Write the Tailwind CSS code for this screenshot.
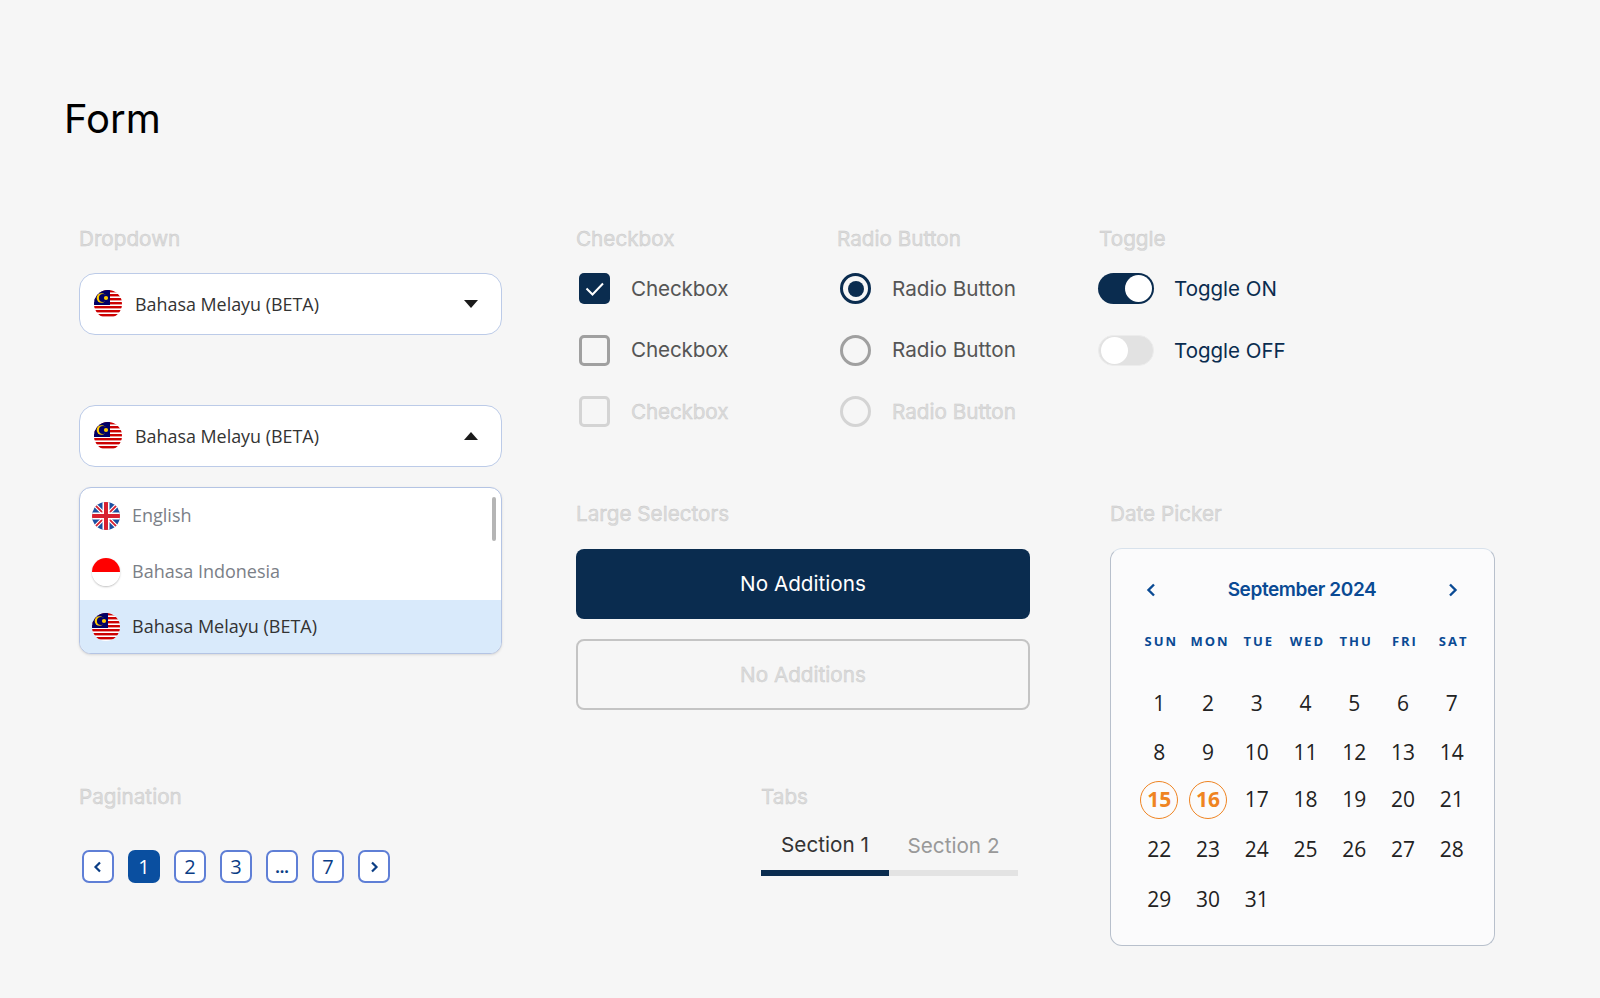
<!DOCTYPE html>
<html lang="en">
<head>
    <meta charset="UTF-8">
    <meta name="viewport" content="width=device-width, initial-scale=1.0">
    <script src="https://cdn.jsdelivr.net/npm/@tailwindcss/browser@4"></script>
    <title>Form</title>
</head>
<body class="bg-[#f6f6f6] font-['Inter',sans-serif]">

    <!-- flags, reused below -->
    <svg class="hidden">
        <symbol id="flag-my" viewBox="0 0 28 28">
            <rect width="28" height="28" fill="#fff"/>
            <rect y="0" width="28" height="2.4" fill="#cc0001"/>
            <rect y="4" width="28" height="2.4" fill="#cc0001"/>
            <rect y="8" width="28" height="2.4" fill="#cc0001"/>
            <rect y="12" width="28" height="2.4" fill="#cc0001"/>
            <rect y="16" width="28" height="2.4" fill="#cc0001"/>
            <rect y="20" width="28" height="2.4" fill="#cc0001"/>
            <rect y="24" width="28" height="2.4" fill="#cc0001"/>
            <rect width="16" height="15" fill="#010066"/>
            <circle cx="7.5" cy="8" r="4.8" fill="#ffcc00"/>
            <circle cx="9" cy="8" r="4.1" fill="#010066"/>
            <circle cx="12" cy="8" r="2.1" fill="#ffcc00"/>
        </symbol>
        <symbol id="flag-uk" viewBox="0 0 28 28">
            <rect width="28" height="28" fill="#1c4fa1"/>
            <path d="M0 0L28 28M28 0L0 28" stroke="#fff" stroke-width="4"/>
            <path d="M0 0L28 28M28 0L0 28" stroke="#d8202f" stroke-width="1.8"/>
            <path d="M14 0V28M0 14H28" stroke="#fff" stroke-width="7"/>
            <path d="M14 0V28M0 14H28" stroke="#d8202f" stroke-width="4"/>
        </symbol>
        <symbol id="flag-id" viewBox="0 0 28 28">
            <rect width="28" height="14" fill="#ff0000"/>
            <rect y="14" width="28" height="14" fill="#fff"/>
        </symbol>
    </svg>

    <div class="h-[998px] overflow-hidden">
        <h1 class="pt-[95px] pl-[64px] text-[40px] leading-[48px] text-black">Form</h1>

        <div class="mt-[83px] ml-[79px] grid grid-cols-[497px_534px_400px] grid-rows-[275px_283px_auto]">

            <!-- dropdown -->
            <section class="row-span-2 w-[423px]">
                <h2 class="text-[20.7px] leading-[26px] text-[#dcdcdc] [-webkit-text-stroke:0.4px_#c8c8c8]">Dropdown</h2>
                <div class="mt-[21px] h-[62px] flex items-center pl-[14px] pr-[23px] bg-white border border-[#bccbe8] rounded-2xl">
                    <svg class="w-7 h-7 rounded-full"><use href="#flag-my"/></svg>
                    <span class="ml-[13px] font-['Open_Sans',sans-serif] text-[17.9px] text-[#333]">Bahasa Melayu (BETA)</span>
                    <svg class="ml-auto w-[14px] h-2" viewBox="0 0 14 8"><path d="M0 0H14L7 8Z" fill="#1a1a1a"/></svg>
                </div>
                <div class="mt-[70px] h-[62px] flex items-center pl-[14px] pr-[23px] bg-white border border-[#bccbe8] rounded-2xl">
                    <svg class="w-7 h-7 rounded-full"><use href="#flag-my"/></svg>
                    <span class="ml-[13px] font-['Open_Sans',sans-serif] text-[17.9px] text-[#333]">Bahasa Melayu (BETA)</span>
                    <svg class="ml-auto w-[14px] h-2" viewBox="0 0 14 8"><path d="M0 8H14L7 0Z" fill="#1a1a1a"/></svg>
                </div>
                <div class="relative mt-5 h-[167px] bg-white border border-[#b4c4e4] rounded-xl overflow-hidden shadow-sm font-['Open_Sans',sans-serif] text-[18px]">
                    <div class="h-[56px] flex items-center pl-3 text-[#7b8087]">
                        <svg class="w-7 h-7 rounded-full"><use href="#flag-uk"/></svg>
                        <span class="ml-3 pb-0.5">English</span>
                    </div>
                    <div class="h-[56px] flex items-center pl-3 text-[#7b8087]">
                        <svg class="w-7 h-7 rounded-full shadow-[0_1px_2px_rgba(0,0,0,0.25)]"><use href="#flag-id"/></svg>
                        <span class="ml-3 pb-0.5">Bahasa Indonesia</span>
                    </div>
                    <div class="h-[53px] flex items-center pl-3 bg-[#d9eafb] text-[#333]">
                        <svg class="w-7 h-7 rounded-full"><use href="#flag-my"/></svg>
                        <span class="ml-3">Bahasa Melayu (BETA)</span>
                    </div>
                    <div class="absolute top-[9px] right-[5px] w-1 h-[44px] rounded-full bg-[#b5b5b5]"></div>
                </div>
            </section>

            <!-- checkbox, radio, toggle -->
            <section class="col-span-2 flex">
                <div class="w-[261px]">
                    <h2 class="text-[20.7px] leading-[26px] text-[#dcdcdc] [-webkit-text-stroke:0.4px_#c8c8c8]">Checkbox</h2>
                    <div class="mt-[21px] flex flex-col gap-[30.5px] text-[20.7px] tracking-[-0.15px] text-[#555]">
                        <label class="flex items-center h-[31px] pl-[3px]">
                            <span class="w-[31px] h-[31px] rounded-[5px] bg-[#0a2c4f] flex items-center justify-center">
                                <svg class="w-[31px] h-[31px]" viewBox="0 0 31 31" fill="none"><path d="M7.5 15.5L13.5 21.5L24 10.5" stroke="#fff" stroke-width="2"/></svg>
                            </span>
                            <span class="ml-[21px]">Checkbox</span>
                        </label>
                        <label class="flex items-center h-[31px] pl-[3px]">
                            <span class="w-[31px] h-[31px] rounded-[5px] border-[3px] border-[#a0a0a0]"></span>
                            <span class="ml-[21px]">Checkbox</span>
                        </label>
                        <label class="flex items-center h-[31px] pl-[3px] text-[#dcdcdc] [-webkit-text-stroke:0.4px_#c8c8c8]">
                            <span class="w-[31px] h-[31px] rounded-[5px] border-[3px] border-[#d4d4d4]"></span>
                            <span class="ml-[21px]">Checkbox</span>
                        </label>
                    </div>
                </div>
                <div class="w-[262px]">
                    <h2 class="text-[20.7px] leading-[26px] text-[#dcdcdc] [-webkit-text-stroke:0.4px_#c8c8c8]">Radio Button</h2>
                    <div class="mt-[21px] flex flex-col gap-[30.5px] text-[20.7px] text-[#555]">
                        <label class="flex items-center h-[31px] pl-[3px]">
                            <span class="w-[31px] h-[31px] rounded-full border-[3px] border-[#0a2c4f] flex items-center justify-center">
                                <span class="w-4 h-4 rounded-full bg-[#0a2c4f]"></span>
                            </span>
                            <span class="ml-[21px]">Radio Button</span>
                        </label>
                        <label class="flex items-center h-[31px] pl-[3px]">
                            <span class="w-[31px] h-[31px] rounded-full border-[3px] border-[#a0a0a0]"></span>
                            <span class="ml-[21px]">Radio Button</span>
                        </label>
                        <label class="flex items-center h-[31px] pl-[3px] text-[#dcdcdc] [-webkit-text-stroke:0.4px_#c8c8c8]">
                            <span class="w-[31px] h-[31px] rounded-full border-[3px] border-[#d4d4d4]"></span>
                            <span class="ml-[21px]">Radio Button</span>
                        </label>
                    </div>
                </div>
                <div>
                    <h2 class="text-[20.7px] leading-[26px] text-[#dcdcdc] [-webkit-text-stroke:0.4px_#c8c8c8]">Toggle</h2>
                    <div class="mt-[21px] flex flex-col gap-[31px] text-[20.5px] text-[#0a2c4f]">
                        <label class="flex items-center h-[31px] -ml-px">
                            <span class="w-[56px] h-[31px] rounded-full bg-[#0a2c4f] flex items-center justify-end pr-0.5">
                                <span class="w-[27px] h-[27px] rounded-full bg-white"></span>
                            </span>
                            <span class="ml-[20px] pt-0.5">Toggle ON</span>
                        </label>
                        <label class="flex items-center h-[31px] -ml-px">
                            <span class="w-[56px] h-[31px] rounded-full bg-[#e2e2e2] border border-[#ececec] flex items-center pl-0.5">
                                <span class="w-[27px] h-[27px] rounded-full bg-white"></span>
                            </span>
                            <span class="ml-[20px] pt-0.5">Toggle OFF</span>
                        </label>
                    </div>
                </div>
            </section>

            <!-- large selectors -->
            <section class="w-[454px]">
                <h2 class="text-[20.7px] leading-[26px] text-[#dcdcdc] [-webkit-text-stroke:0.4px_#c8c8c8]">Large Selectors</h2>
                <button class="mt-[22px] w-full h-[70px] rounded-lg bg-[#0a2c4f] text-white text-[20.7px]">No Additions</button>
                <button class="mt-5 w-full h-[71px] rounded-lg border-2 border-[#c4c4c4] text-[#dcdcdc] [-webkit-text-stroke:0.4px_#c8c8c8] text-[20.7px]">No Additions</button>
            </section>

            <!-- date picker -->
            <section class="row-span-2">
                <h2 class="text-[20.7px] leading-[26px] text-[#dcdcdc] [-webkit-text-stroke:0.4px_#c8c8c8]">Date Picker</h2>
                <div class="mt-[21px] w-[385px] h-[398px] bg-[#fbfbfc] border border-[#b8c0cc] border-t-[#d8e2ec] rounded-xl pl-[26px] pr-[16px] pt-[29px]">
                    <div class="-ml-[1px] pl-[7px] pr-[17px] flex items-center justify-between h-6">
                        <svg class="w-4 h-4" viewBox="0 0 16 16" fill="none"><path d="M11 2.5L5.5 8L11 13.5" stroke="#0a4a94" stroke-width="2.4"/></svg>
                        <span class="text-[19px] font-semibold text-[#0a4a94] tracking-[-0.4px]">September 2024</span>
                        <svg class="w-4 h-4" viewBox="0 0 16 16" fill="none"><path d="M5 2.5L10.5 8L5 13.5" stroke="#0a4a94" stroke-width="2.4"/></svg>
                    </div>
                    <div class="mt-[30px] h-[18px] grid grid-cols-7 text-center font-['Open_Sans',sans-serif] font-bold text-[13px] leading-[18px] tracking-[2px] text-[#0a4a94]">
                        <span>SUN</span><span>MON</span><span>TUE</span><span>WED</span><span>THU</span><span>FRI</span><span>SAT</span>
                    </div>
                    <div class="mt-[29px] -ml-[2px] mr-[2px] grid grid-cols-7 grid-rows-[49px_49px_45px_55px_45px] items-center justify-items-center font-['Open_Sans',sans-serif] text-[21px] text-[#222]">
                        <span>1</span><span>2</span><span>3</span><span>4</span><span>5</span><span>6</span><span>7</span>
                        <span>8</span><span>9</span><span>10</span><span>11</span><span>12</span><span>13</span><span>14</span>
                        <span class="w-[38px] h-[38px] flex items-center justify-center rounded-full border border-[#ef8422] text-[#ef8422] font-bold">15</span>
                        <span class="w-[38px] h-[38px] flex items-center justify-center rounded-full border border-[#ef8422] text-[#ef8422] font-bold">16</span>
                        <span>17</span><span>18</span><span>19</span><span>20</span><span>21</span>
                        <span>22</span><span>23</span><span>24</span><span>25</span><span>26</span><span>27</span><span>28</span>
                        <span>29</span><span>30</span><span>31</span>
                    </div>
                </div>
            </section>

            <!-- pagination and tabs -->
            <section class="col-span-2 flex">
                <div class="w-[682px]">
                    <h2 class="text-[20.7px] leading-[26px] text-[#dcdcdc] [-webkit-text-stroke:0.4px_#c8c8c8]">Pagination</h2>
                    <div class="mt-[40px] ml-[3px] flex gap-[14px] font-['Open_Sans',sans-serif] font-medium text-[20px] text-[#0a3d85]">
                        <button class="w-8 h-[33px] rounded-[7px] border-2 border-[#5f7fd6] bg-white flex items-center justify-center">
                            <svg class="w-3.5 h-3.5" viewBox="0 0 14 14" fill="none"><path d="M9 2.5L4.5 7L9 11.5" stroke="#0a3d85" stroke-width="2.2"/></svg>
                        </button>
                        <button class="w-8 h-[33px] rounded-[7px] bg-[#0a4fa0] text-white flex items-center justify-center">1</button>
                        <button class="w-8 h-[33px] rounded-[7px] border-2 border-[#5f7fd6] bg-white flex items-center justify-center">2</button>
                        <button class="w-8 h-[33px] rounded-[7px] border-2 border-[#5f7fd6] bg-white flex items-center justify-center">3</button>
                        <button class="w-8 h-[33px] rounded-[7px] border-2 border-[#5f7fd6] bg-white flex items-center justify-center font-bold text-[16px]">...</button>
                        <button class="w-8 h-[33px] rounded-[7px] border-2 border-[#5f7fd6] bg-white flex items-center justify-center">7</button>
                        <button class="w-8 h-[33px] rounded-[7px] border-2 border-[#5f7fd6] bg-white flex items-center justify-center">
                            <svg class="w-3.5 h-3.5" viewBox="0 0 14 14" fill="none"><path d="M5 2.5L9.5 7L5 11.5" stroke="#0a3d85" stroke-width="2.2"/></svg>
                        </button>
                    </div>
                </div>
                <div>
                    <h2 class="text-[20.7px] leading-[26px] text-[#dcdcdc] [-webkit-text-stroke:0.4px_#c8c8c8]">Tabs</h2>
                    <div class="mt-[23px] flex text-[20.7px]">
                        <span class="w-[128px] text-center pb-[13px] leading-6 border-b-[6px] border-[#0a2c4f] text-[#333]">Section 1</span>
                        <span class="w-[129px] text-center pt-px pb-[12px] leading-6 border-b-[6px] border-[#e3e3e3] text-[#999]">Section 2</span>
                    </div>
                </div>
            </section>
        </div>
    </div>

</body>
</html>
